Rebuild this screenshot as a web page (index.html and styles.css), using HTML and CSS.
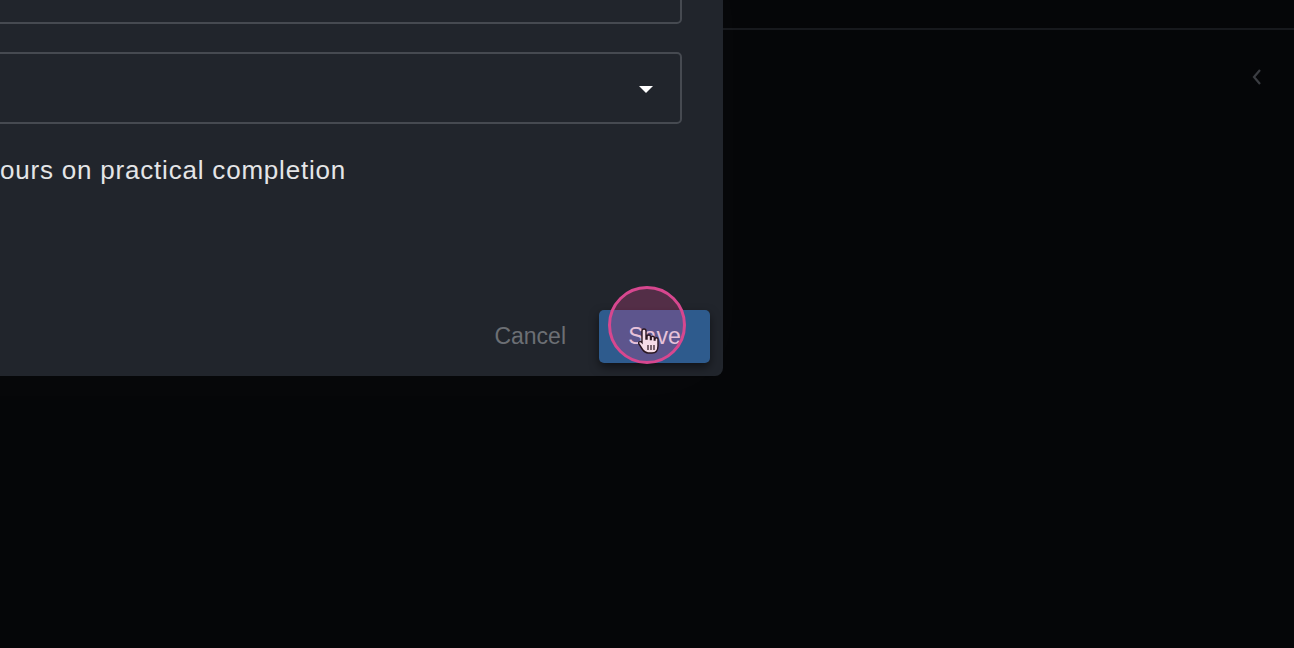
FILE: index.html
```html
<!DOCTYPE html>
<html>
<head>
<meta charset="UTF-8">
<title>Edit task</title>
<link rel="stylesheet" href="styles.css">
</head>
<body>

<div class="topbar"></div>
<div class="side">
	<svg class="chev" width="12" height="18" viewBox="0 0 12 18"><path d="M9 2 L3 9 L9 16" fill="none" stroke="#3b3d42" stroke-width="2.2"/></svg>
</div>

<!-- dialog -->
<div class="dialog">
	<div class="field field_text"></div>
	<div class="field field_select">
		<svg class="caret" width="16" height="9" viewBox="0 0 16 9"><path d="M1 1 L15 1 L8 8 Z" fill="#fff"/></svg>
	</div>
	<div class="check_row">
		<span class="check_label">Add hours on practical completion</span>
	</div>
	<div class="actions">
		<button class="btn_cancel">Cancel</button>
		<button class="btn_save">Save</button>
	</div>
</div>

<!-- click marker -->
<div class="click_ring"></div>
<svg class="hand" width="24" height="28" viewBox="0 0 24 28">
	<path d="M7 2 C8.5 2 9 3 9 4 L9 12 L10 12 L10 9.5 C10 8.5 11 8 12 8 C13 8 13.5 8.8 13.5 9.5 L13.5 12.5 L14.2 12.5 L14.2 10.5 C14.2 9.7 15 9.2 15.8 9.2 C16.7 9.2 17.3 9.8 17.3 10.6 L17.3 13 L18 13 L18 12 C18 11.3 18.7 10.8 19.4 10.8 C20.3 10.8 21 11.4 21 12.2 L21 19 C21 23 19 26 15 26 L11 26 C8.5 26 7 24.5 5.5 22.5 L2 17 C1.3 16 1.6 15 2.6 14.6 C3.5 14.2 4.3 14.6 5 15.5 L5 4 C5 3 5.6 2 7 2 Z" fill="#f6dde8" stroke="#2a1620" stroke-width="1.4"/>
	<path d="M11 18 L11 23 M14 18 L14 23 M17 18 L17 23" stroke="#2a1620" stroke-width="1.2"/>
</svg>

</body>
</html>
```

FILE: styles.css
```css
/* base */
html, body {
	margin: 0;
	height: 100%;
}
body {
	background-color: #050608;
	font-family: "Liberation Sans", Arial, sans-serif;
	overflow: hidden;
	position: relative;
}

/* page behind dialog */
.topbar {
	height: 28px;
	border-bottom: 2px solid #17191d;
}
.side {
	display: flex;
	justify-content: flex-end;
	padding: 38px 31px 0 0;
}

/* dialog */
.dialog {
	position: absolute;
	left: -700px;
	top: -60px;
	width: 1382px;
	padding: 0 41px 13px 0;
	background-color: #21252c;
	border-radius: 0 0 8px 0;
	box-shadow: 0 10px 80px rgba(255, 255, 255, 0.02);
}
.field {
	border: 2px solid #464a51;
	border-radius: 5px;
	box-sizing: border-box;
}
.field_text {
	height: 84px;
	margin-bottom: 28px;
}
.field_select {
	height: 72px;
	display: flex;
	align-items: center;
	justify-content: flex-end;
	padding-right: 26px;
}
.caret {
	margin-top: 2px;
}

.check_row {
	height: 95px;
	padding: 31px 0 0 628px;
	box-sizing: border-box;
}
.check_label {
	color: #e4e5e7;
	font-size: 26px;
	letter-spacing: 0.8px;
}

.actions {
	display: flex;
	justify-content: flex-end;
	align-items: center;
	gap: 33px;
	margin-top: 91px;
	margin-right: -28px;
}
.actions button {
	font-family: "Liberation Sans", Arial, sans-serif;
	font-size: 23px;
	border: 0;
	border-radius: 5px;
	height: 53px;
}
.btn_cancel {
	background: none;
	color: #6c6f74;
	padding: 0;
}
.btn_save {
	width: 111px;
	background-color: #2e5b8d;
	color: #eef1f6;
	box-shadow: 0 4px 10px rgba(0, 0, 0, 0.5);
}

/* click marker */
.click_ring {
	position: absolute;
	left: 608px;
	top: 286px;
	width: 72px;
	height: 72px;
	border: 3px solid #d7478f;
	border-radius: 50%;
	background-color: rgba(214, 72, 143, 0.28);
}
.hand {
	position: absolute;
	left: 637px;
	top: 327px;
}
```
